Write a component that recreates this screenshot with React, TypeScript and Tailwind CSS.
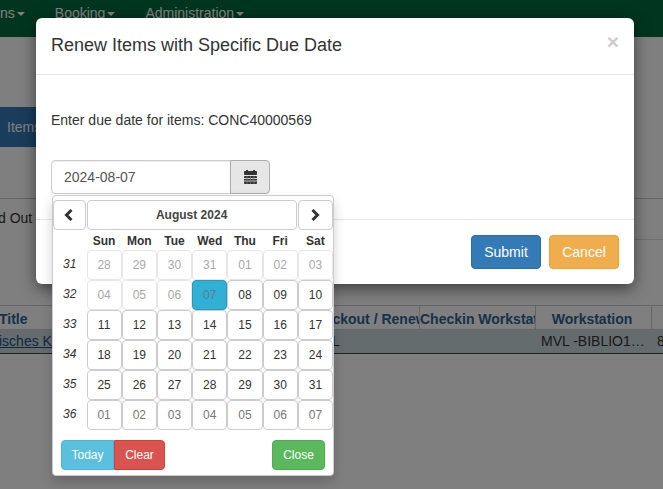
const weekDays = ["Sun", "Mon", "Tue", "Wed", "Thu", "Fri", "Sat"];

type Day = { label: string; kind: "disabled" | "muted" | "normal" | "active" };

const weeks: { no: string; days: Day[] }[] = [
	{
		no: "31",
		days: ["28", "29", "30", "31", "01", "02", "03"].map((label) => ({ label, kind: "disabled" })),
	},
	{
		no: "32",
		days: [
			{ label: "04", kind: "disabled" },
			{ label: "05", kind: "disabled" },
			{ label: "06", kind: "disabled" },
			{ label: "07", kind: "active" },
			{ label: "08", kind: "normal" },
			{ label: "09", kind: "normal" },
			{ label: "10", kind: "normal" },
		],
	},
	{
		no: "33",
		days: ["11", "12", "13", "14", "15", "16", "17"].map((label) => ({ label, kind: "normal" })),
	},
	{
		no: "34",
		days: ["18", "19", "20", "21", "22", "23", "24"].map((label) => ({ label, kind: "normal" })),
	},
	{
		no: "35",
		days: ["25", "26", "27", "28", "29", "30", "31"].map((label) => ({ label, kind: "normal" })),
	},
	{
		no: "36",
		days: ["01", "02", "03", "04", "05", "06", "07"].map((label) => ({ label, kind: "muted" })),
	},
];

const dayClass = {
	disabled: "border-[#e6e6e6] text-[#a8a8a8] bg-white",
	muted: "border-[#ccc] text-[#777] bg-white",
	normal: "border-[#ccc] text-[#333] bg-white",
	active: "border-[#269abc] text-[#5b7c8d] bg-[#31b0d5]",
};

function Caret() {
	return <span className="ml-[2px] inline-block h-0 w-0 border-x-4 border-t-4 border-x-transparent border-t-white align-middle" />;
}

function CalendarIcon() {
	return (
		<svg width="13" height="14" viewBox="0 0 13 14" fill="#333">
			<rect x="2" y="0" width="2" height="2" />
			<rect x="9" y="0" width="2" height="2" />
			<rect x="0" y="1" width="13" height="4" rx="1" />
			<rect x="0" y="6" width="13" height="8" rx="1" />
			<path d="M0 8.5h13M0 11h13" stroke="#d0d0d0" strokeWidth="1" />
			<path d="M3 6v8M6.5 6v8M10 6v8" stroke="#777" strokeWidth="0.8" />
		</svg>
	);
}

function Chevron({ dir }: { dir: "left" | "right" }) {
	return (
		<svg width="10" height="12" viewBox="0 0 10 12" fill="none" stroke="#333" strokeWidth="3">
			<path d={dir === "left" ? "M7.5 1 L2.5 6 L7.5 11" : "M2.5 1 L7.5 6 L2.5 11"} />
		</svg>
	);
}

function DatePicker() {
	return (
		<div className="absolute left-[1px] top-[35px] z-10 h-[281px] w-[282px] rounded border border-[#ccc] bg-white pt-[4px] shadow-[0_6px_12px_rgba(0,0,0,0.18)]">
			<div className="grid grid-cols-[33.5px_repeat(7,1fr)]">
				<button className="mr-[1px] flex h-[30px] items-center justify-center rounded border border-[#ccc]">
					<Chevron dir="left" />
				</button>
				<button className="col-span-6 mr-[1px] h-[30px] rounded border border-[#ccc] text-[12px] font-bold text-[#444]">
					August 2024
				</button>
				<button className="flex h-[30px] items-center justify-center rounded border border-[#ccc]">
					<Chevron dir="right" />
				</button>

				<div className="h-[20px]" />
				{weekDays.map((d) => (
					<div key={d} className="flex h-[20px] items-end justify-center text-[12px] font-bold leading-[18px] text-[#333]">
						{d}
					</div>
				))}

				{weeks.map((w) => [
					<div key={w.no} className="h-[30px] pt-[4px] text-center text-[12px] italic leading-[20px] text-[#333]">
						{w.no}
					</div>,
					...w.days.map((d, i) => (
						<div
							key={w.no + i}
							className={`flex h-[30px] items-center justify-center rounded border text-[12px] ${dayClass[d.kind as keyof typeof dayClass]}`}
						>
							{d.label}
						</div>
					)),
				])}
			</div>
			<div className="mt-[10px] flex justify-between px-[8px] text-[12px] text-white">
				<div className="flex">
					<button className="h-[30px] w-[53px] rounded-l border border-[#46b8da] bg-[#5bc0de]">Today</button>
					<button className="h-[30px] w-[51px] rounded-r border border-[#d43f3a] bg-[#d9534f]">Clear</button>
				</div>
				<button className="h-[30px] w-[53px] rounded border border-[#4cae4c] bg-[#5cb85c]">Close</button>
			</div>
		</div>
	);
}

function Modal() {
	return (
		<div className="absolute left-[36px] top-[18px] w-[598px] rounded-md bg-white text-[14px] text-[#333] shadow-[0_5px_15px_rgba(0,0,0,0.5)]">
			<div className="flex items-start justify-between border-b border-[#e5e5e5] px-[15px] pb-[16px] pt-[14px]">
				<h4 className="text-[18px] leading-[26px]">Renew Items with Specific Due Date</h4>
				<button className="mt-[1px] text-[21px] font-bold leading-[17px] text-[#ccc]">×</button>
			</div>
			<div className="h-[144px] px-[15px] pt-[35px]">
				<p className="leading-5">Enter due date for items: CONC40000569</p>
				<div className="relative mt-[30px] flex h-[34px] w-[219px]">
					<input
						readOnly
						value="2024-08-07"
						className="h-[34px] w-[180px] rounded-l border border-[#ccc] px-3 text-[14px] text-[#555] outline-none shadow-[inset_0_1px_1px_rgba(0,0,0,0.075)]"
					/>
					<button className="-ml-[1px] flex h-[34px] w-[40px] items-center justify-center rounded-r border border-[#adadad] bg-[#e6e6e6]">
						<CalendarIcon />
					</button>
					<DatePicker />
				</div>
			</div>
			<div className="flex justify-end gap-2 border-t border-[#e5e5e5] p-[15px]">
				<button className="h-[34px] w-[70px] rounded border border-[#2e6da4] bg-[#337ab7] text-white">Submit</button>
				<button className="h-[34px] w-[70px] rounded border border-[#eea236] bg-[#f0ad4e] text-white">Cancel</button>
			</div>
		</div>
	);
}

export default function App() {
	return (
		<div className="relative h-[489px] w-[663px] overflow-hidden bg-white font-['Liberation_Sans',sans-serif] text-[14px] text-[#333]">
			<nav className="flex h-[37px] gap-[30px] whitespace-nowrap bg-[#026a3e] pt-[3px] leading-5 text-white">
				<span>ns<Caret /></span>
				<span>Booking<Caret /></span>
				<span>Administration<Caret /></span>
			</nav>

			<div className="mt-[70px] flex h-[40px] w-[100px] items-center bg-[#337ab7] pl-[7px] text-white">Items</div>

			<div className="-ml-[2px] mt-[51px] border-t border-[#ccc] pt-[9px] leading-5 whitespace-nowrap">d Out (1)</div>
			<div className="ml-auto mt-[11px] w-[100px] border-t border-[#ddd]" />

			<div className="mt-[65px] border-y border-[#ccc]">
				<div className="grid h-[23px] grid-cols-[306px_114px_116px_116px_1fr] whitespace-nowrap font-bold leading-5 text-[#2a6496]">
					<div className="-ml-[1px] pt-[3px]">Title</div>
					<div className="overflow-hidden border-r border-[#ccc] pt-[3px]">Checkout / Renewal</div>
					<div className="overflow-hidden border-r border-[#ccc] pt-[3px]">Checkin Workstation</div>
					<div className="border-r border-[#ccc] pr-[3px] pt-[3px] text-center">Workstation</div>
					<div />
				</div>
			</div>
			<div className="grid h-[24px] grid-cols-[306px_114px_116px_116px_1fr] items-center border-b border-[#444] bg-[#c8d8dc] whitespace-nowrap">
				<a className="-ml-[1px] text-[#23527c] underline">isches Kunst</a>
				<div className="overflow-hidden pl-[26px]">L</div>
				<div />
				<div className="truncate pl-[5px] pr-[6px]">MVL -BIBLIO1234</div>
				<div className="pl-[5px]">8</div>
			</div>

			<div className="absolute inset-0 bg-black/50" />
			<Modal />
		</div>
	);
}
